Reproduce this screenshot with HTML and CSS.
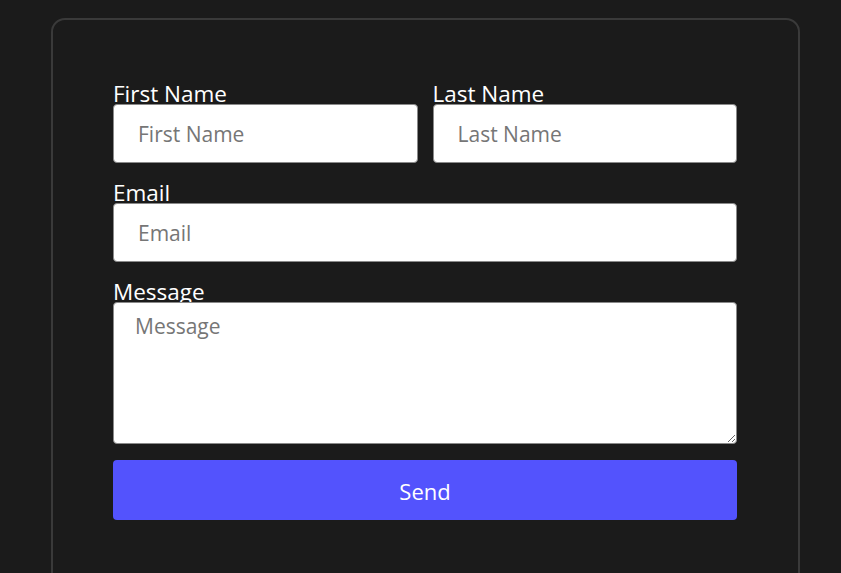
FILE: index.html
```html
<!DOCTYPE html>
<html lang="en">
<head>
<meta charset="utf-8">
<title>Contact</title>
<link rel="stylesheet" href="styles.css">
</head>
<body>
  <div class="card">
    <form class="form">
      <div class="row">
        <div class="field">
          <label class="label" for="fn">First Name</label>
          <input class="input" id="fn" type="text" placeholder="First Name">
        </div>
        <div class="field">
          <label class="label" for="ln">Last Name</label>
          <input class="input" id="ln" type="text" placeholder="Last Name">
        </div>
      </div>
      <div class="field">
        <label class="label" for="em">Email</label>
        <input class="input" id="em" type="email" placeholder="Email">
      </div>
      <div class="field">
        <label class="label" for="msg">Message</label>
        <textarea class="textarea" id="msg" placeholder="Message"></textarea>
      </div>
      <button class="button" type="button">Send</button>
    </form>
  </div>
</body>
</html>
```
FILE: styles.css
```css
html, body {
  margin: 0;
  padding: 0;
  background: #1b1b1b;
  font-family: "Open Sans", "Noto Sans", sans-serif;
}
.card {
  box-sizing: border-box;
  width: 749px;
  height: 600px;
  margin: 18px 0 0 51px;
  border: 2px solid #3a3a3a;
  border-radius: 14px;
  padding: 64px 61px 0 60px;
}
.form {
  display: flex;
  flex-direction: column;
  gap: 20px;
}
.row {
  display: grid;
  grid-template-columns: 1fr 1fr;
  gap: 15px;
}
.field {
  display: flex;
  flex-direction: column;
}
.label {
  display: block;
  height: 20px;
  line-height: 20px;
  font-size: 22.5px;
  color: #ffffff;
  white-space: nowrap;
}
.input, .textarea {
  box-sizing: border-box;
  width: 100%;
  border: 1px solid #8a8a8a;
  border-radius: 4px;
  background: #ffffff;
  font-family: "Open Sans", "Noto Sans", sans-serif;
  font-size: 21px;
  color: #333;
  outline: none;
  margin: 0;
}
.input {
  height: 59px;
  padding: 0 24px;
}
.textarea {
  height: 142px;
  padding: 9px 21px;
  resize: vertical;
  display: block;
}
.input::placeholder, .textarea::placeholder {
  color: #767676;
}
.button {
  margin-top: -4px;
  height: 60px;
  padding: 2px 0 0;
  border: none;
  border-radius: 4px;
  background: #5353fd;
  color: #ffffff;
  font-family: "Open Sans", "Noto Sans", sans-serif;
  font-size: 22px;
  cursor: pointer;
}
```
